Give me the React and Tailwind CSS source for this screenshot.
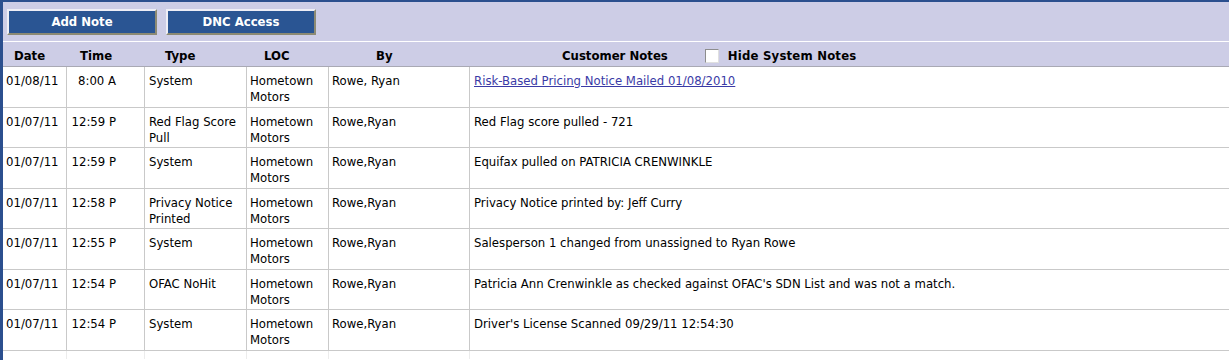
import { useState } from "react";

const rows = [
  { date: "01/08/11", time: "8:00 A", type: ["System"], by: "Rowe, Ryan", note: "Risk-Based Pricing Notice Mailed 01/08/2010", link: true },
  { date: "01/07/11", time: "12:59 P", type: ["Red Flag Score", "Pull"], by: "Rowe,Ryan", note: "Red Flag score pulled - 721" },
  { date: "01/07/11", time: "12:59 P", type: ["System"], by: "Rowe,Ryan", note: "Equifax pulled on PATRICIA CRENWINKLE" },
  { date: "01/07/11", time: "12:58 P", type: ["Privacy Notice", "Printed"], by: "Rowe,Ryan", note: "Privacy Notice printed by: Jeff Curry" },
  { date: "01/07/11", time: "12:55 P", type: ["System"], by: "Rowe,Ryan", note: "Salesperson 1 changed from unassigned to Ryan Rowe" },
  { date: "01/07/11", time: "12:54 P", type: ["OFAC NoHit"], by: "Rowe,Ryan", note: "Patricia Ann Crenwinkle as checked against OFAC's SDN List and was not a match." },
  { date: "01/07/11", time: "12:54 P", type: ["System"], by: "Rowe,Ryan", note: "Driver's License Scanned 09/29/11 12:54:30" },
];

const cols = "grid grid-cols-[64px_78px_102px_82px_141px_1fr]";

function ToolButton({ children }) {
  return (
    <button className="w-[150px] h-[26px] bg-[#2a5593] text-white font-bold text-[13px] border-2 border-t-[#eeeef6] border-l-[#eeeef6] border-b-[#8c8a74] border-r-[#8c8a74]">
      {children}
    </button>
  );
}

export default function App() {
  const [hideSystem, setHideSystem] = useState(false);

  return (
    <div
      className="w-[1229px] h-[360px] overflow-hidden bg-white border-t-2 border-l-[3px] border-[#2b4f8e] text-[13px] text-black"
      style={{ fontFamily: "Tahoma, 'DejaVu Sans Condensed', 'Liberation Sans', sans-serif" }}
    >
      {/* Toolbar */}
      <div className="h-[40px] bg-[#cdcde6] border-b border-white flex items-start gap-[9px] pl-[4px] pt-[7px]">
        <ToolButton>Add Note</ToolButton>
        <ToolButton>DNC Access</ToolButton>
      </div>

      {/* Header */}
      <div className={`${cols} h-[25px] pt-[3px] bg-[#cdcde6] border-b border-[#a9a9b4] font-bold text-[13px] items-center`}>
        <div className="pl-[11px]">Date</div>
        <div className="pl-[13px]">Time</div>
        <div className="pl-[20px]">Type</div>
        <div className="pl-[17px]">LOC</div>
        <div className="pl-[47px]">By</div>
        <div className="flex items-center pl-[92px]">
          <span>Customer Notes</span>
          <label className="flex items-center ml-[37px] gap-[9px]">
            <input
              type="checkbox"
              checked={hideSystem}
              onChange={(e) => setHideSystem(e.target.checked)}
              className="appearance-none w-[14px] h-[14px] bg-white border border-t-[#8d8d8d] border-l-[#8d8d8d] border-b-[#e0e0e0] border-r-[#e0e0e0]"
            />
            <span className="tracking-[0.2px]">Hide System Notes</span>
          </label>
        </div>
      </div>

      {/* Rows */}
      {rows.map((r, i) => (
        <div key={i} className={`${cols} h-[40.5px] border-b border-[#c9c9c9] leading-[16px]`}>
          <div className="border-r border-[#c9c9c9] pl-[3px] pt-[6px]">{r.date}</div>
          <div className="border-r border-[#c9c9c9] pl-[3px] pt-[6px]">
            <span className="inline-block w-[46px] text-right">{r.time}</span>
          </div>
          <div className="border-r border-[#c9c9c9] pl-[4px] pt-[6px]">
            {r.type.map((t, j) => (
              <div key={j}>{t}</div>
            ))}
          </div>
          <div className="border-r border-[#c9c9c9] pl-[3px] pt-[6px]">
            <div>Hometown</div>
            <div>Motors</div>
          </div>
          <div className="border-r border-[#c9c9c9] pl-[3px] pt-[6px]">{r.by}</div>
          <div className="pl-[4px] pt-[6px] whitespace-pre">
            {r.link ? (
              <a href="#" className="text-[#3a3aa6] underline">{r.note}</a>
            ) : (
              r.note
            )}
          </div>
        </div>
      ))}
      <div className={`${cols} h-[8px]`}>
        <div className="border-r border-[#ececec]" />
        <div className="border-r border-[#ececec]" />
        <div className="border-r border-[#ececec]" />
        <div className="border-r border-[#ececec]" />
        <div className="border-r border-[#ececec]" />
        <div />
      </div>
    </div>
  );
}
